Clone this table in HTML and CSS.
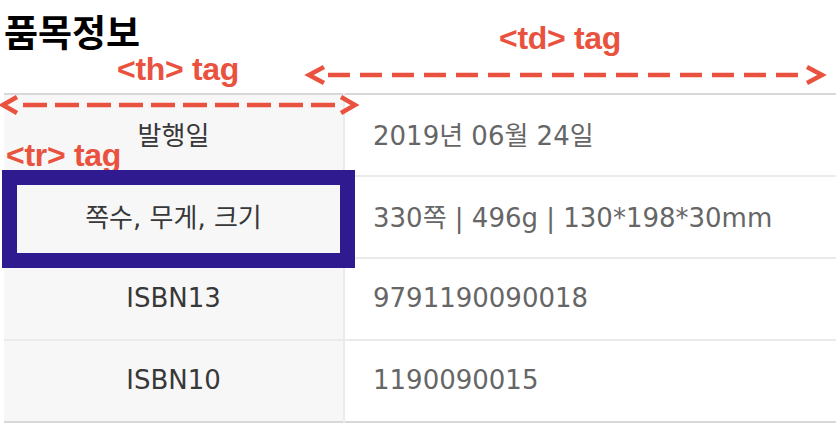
FILE: index.html
```html
<!DOCTYPE html>
<html lang="ko">
<head>
<meta charset="utf-8">
<title>품목정보</title>
<link rel="stylesheet" href="styles.css">
</head>
<body>
<div class="page">
  <h1 class="title">품목정보</h1>
  <table class="info">
    <tr><th>발행일</th><td>2019년 06월 24일</td></tr>
    <tr><th>쪽수, 무게, 크기</th><td>330쪽 | 496g | 130*198*30mm</td></tr>
    <tr><th>ISBN13</th><td>9791190090018</td></tr>
    <tr><th>ISBN10</th><td>1190090015</td></tr>
  </table>

  <svg class="arrows" width="836" height="424" viewBox="0 0 836 424" aria-hidden="true">
    <g fill="none" stroke="#ea5240" stroke-width="4.5" stroke-linejoin="miter">
      <polyline points="17,97 3,105 17,113"/>
      <line x1="23" y1="105" x2="335" y2="105" stroke-dasharray="24 8"/>
      <polyline points="341,97 355,105 341,113"/>
      <polyline points="324,67 309,75 324,83"/>
      <line x1="328" y1="75" x2="804" y2="75" stroke-dasharray="22 10"/>
      <polyline points="807,67 822,75 807,83"/>
    </g>
  </svg>
  <span class="label label-td">&lt;td&gt; tag</span>
  <span class="label label-th">&lt;th&gt; tag</span>
  <span class="label label-tr">&lt;tr&gt; tag</span>
  <div class="tr-box"></div>
</div>
</body>
</html>
```

FILE: styles.css
```css
html, body {
  margin: 0;
  padding: 0;
  background: #ffffff;
}

.page {
  position: relative;
  width: 836px;
  height: 424px;
  overflow: hidden;
}

.title {
  margin: 0;
  height: 93px;
  padding-left: 4px;
  font-family: "Noto Sans CJK KR", sans-serif;
  font-weight: 700;
  font-size: 37px;
  line-height: 62px;
  color: #000000;
}

.info {
  margin-left: 4px;
  width: 832px;
  border-collapse: collapse;
  border-top: 2px solid #d8d8d8;
  border-bottom: 2px solid #d8d8d8;
  font-family: "DejaVu Sans", "Noto Sans CJK KR", sans-serif;
  font-size: 26px;
}

.info tr + tr th,
.info tr + tr td {
  border-top: 2px solid #ebebeb;
}

.info th,
.info td {
  height: 77px;
  padding: 0 0 3px 0;
}

.info th {
  width: 339px;
  background: #f7f7f7;
  border-right: 2px solid #ebebeb;
  font-weight: 400;
  color: #383838;
  text-align: center;
}

.info td {
  padding-left: 28px;
  color: #666666;
  text-align: left;
}

.arrows {
  position: absolute;
  left: 0;
  top: 0;
  pointer-events: none;
}

.label {
  position: absolute;
  font-family: "Liberation Sans", Arial, sans-serif;
  font-weight: 700;
  font-size: 32px;
  line-height: 1;
  color: #ea5240;
  white-space: nowrap;
  letter-spacing: -0.3px;
}

.label-td { left: 499px; top: 22px; }
.label-th { left: 117px; top: 53px; }
.label-tr { left: 6px; top: 139px; }

.tr-box {
  position: absolute;
  left: 2px;
  top: 170px;
  width: 323px;
  height: 68px;
  border: 15px solid #2f1b8f;
}
```
